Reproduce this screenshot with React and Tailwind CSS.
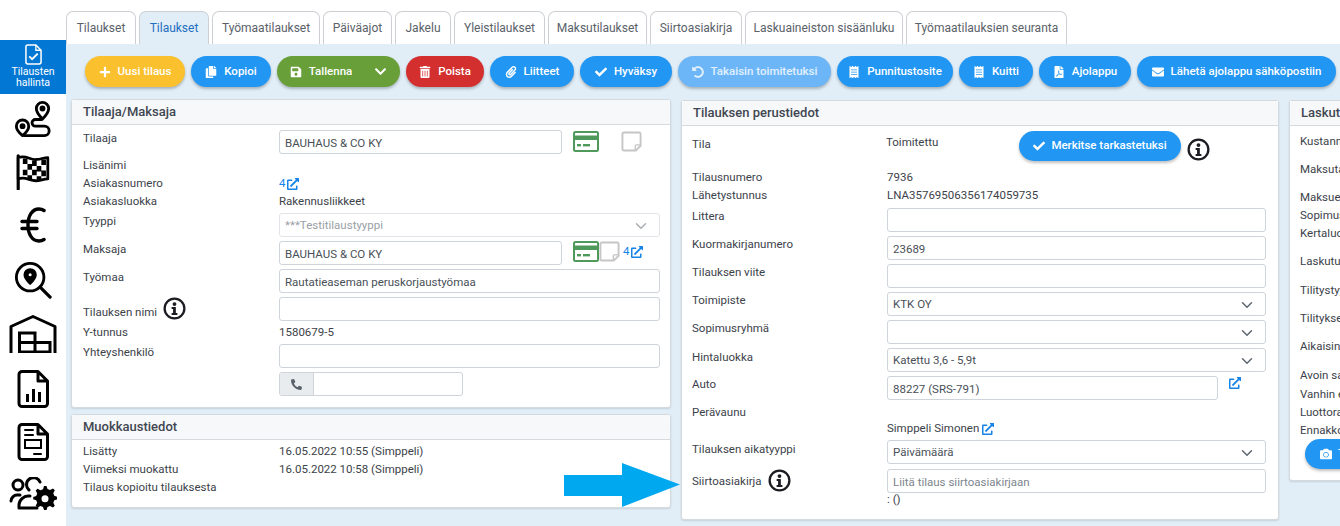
import { FaPlus, FaCopy, FaSave, FaTrashAlt, FaPaperclip, FaCheck, FaUndoAlt, FaReceipt, FaFilePdf, FaEnvelope, FaChevronDown, FaPhoneAlt, FaCamera, FaExternalLinkAlt } from 'react-icons/fa'
import { ChevronDown } from 'lucide-react'

const tabs = [
  ['Tilaukset', 'w-[70px]'],
  ['Tilaukset', 'w-[70px]', true],
  ['Työmaatilaukset', 'w-[108px]'],
  ['Päiväajot', 'w-[69px]'],
  ['Jakelu', 'w-[56px]'],
  ['Yleistilaukset', 'w-[91px]'],
  ['Maksutilaukset', 'w-[99px]'],
  ['Siirtoasiakirja', 'w-[92px]'],
  ['Laskuaineiston sisäänluku', 'w-[158px]'],
  ['Työmaatilauksien seuranta', 'w-[161px]'],
]

const buttons = [
  ['Uusi tilaus', FaPlus, 'w-[100px] bg-[#fbc02d]'],
  ['Kopioi', FaCopy, 'w-[80px] bg-[#2196f3]'],
  ['Poista', FaTrashAlt, 'w-[78px] bg-[#d32f2f]'],
  ['Liitteet', FaPaperclip, 'w-[84px] bg-[#2196f3]'],
  ['Hyväksy', FaCheck, 'w-[92px] bg-[#2196f3]'],
  ['Takaisin toimitetuksi', FaUndoAlt, 'w-[153px] bg-[#6cb6f7] text-white/80'],
  ['Punnitustosite', FaReceipt, 'w-[116px] bg-[#2196f3]'],
  ['Kuitti', FaReceipt, 'w-[74px] bg-[#2196f3]'],
  ['Ajolappu', FaFilePdf, 'w-[92px] bg-[#2196f3]'],
  ['Lähetä ajolappu sähköpostiin', FaEnvelope, 'w-[199px] bg-[#2196f3]'],
]

function ActionButton({ label, icon: Icon, className }) {
  return (
    <button className={`flex h-[31px] shrink-0 items-center justify-center gap-[7px] rounded-full text-[11.5px] font-medium text-white shadow-[0_2px_3px_rgba(0,0,0,0.25)] ${className}`}>
      <Icon className="text-[12px]" />
      {label}
    </button>
  )
}

function Panel({ title, children, className = '' }) {
  return (
    <section className={`rounded-[3px] border border-[#d5dade] bg-white shadow-[0_1px_2px_rgba(0,0,0,0.12)] ${className}`}>
      <h3 className="flex h-[25px] items-center whitespace-nowrap border-b border-[#d5dade] bg-[#f7f8fa] px-[11px] text-[13px] font-medium text-[#3f4650]">
        {title}
      </h3>
      {children}
    </section>
  )
}

function Field({ value, placeholder, className = 'w-full' }) {
  return (
    <input
      readOnly
      value={value ?? ''}
      placeholder={placeholder}
      className={`h-[24px] rounded-[3px] border border-[#ced4da] bg-white px-[5px] pt-px text-[11.5px] text-[#495057] outline-none placeholder:text-[#7d858d] ${className}`}
    />
  )
}

function Select({ value, disabled }) {
  return (
    <div className={`flex h-[24px] w-full items-center rounded-[3px] border pl-[5px] pr-[9px] pt-px text-[11.5px] ${disabled ? 'border-[#e1e4e8] text-[#9aa0a6]' : 'border-[#ced4da] text-[#495057]'}`}>
      {value}
      <ChevronDown strokeWidth={2} className={`ml-auto h-[18px] w-[18px] ${disabled ? 'text-[#a9aeb3]' : 'text-[#5f6770]'}`} />
    </div>
  )
}

function InfoIcon({ className = '' }) {
  return (
    <svg viewBox="0 0 24 24" className={`h-[23px] w-[23px] shrink-0 ${className}`}>
      <circle cx="12" cy="12" r="10.300" fill="none" stroke="#1c1c22" strokeWidth="2.400" />
      <circle cx="12" cy="7.400" r="2" fill="#1c1c22" />
      <path d="M9 10.400h4.400v6.200h1.600v2.200H9v-2.200h1.500v-4H9z" fill="#1c1c22" />
    </svg>
  )
}

function OpenLink({ className = '' }) {
  return <FaExternalLinkAlt className={`text-[12px] text-[#1683e6] ${className}`} />
}

function CardIcon() {
  return (
    <svg viewBox="0 0 26 21" className="h-[21px] w-[26px] shrink-0">
      <rect x="1" y="1" width="24" height="19" rx="1.500" fill="#fff" stroke="#4f9a5b" strokeWidth="2" />
      <rect x="1" y="4.500" width="24" height="4.500" fill="#4f9a5b" />
      <rect x="4" y="13" width="4" height="2.400" fill="#4f9a5b" />
      <rect x="10" y="13" width="7" height="2.400" fill="#4f9a5b" />
    </svg>
  )
}

function NoteIcon() {
  return (
    <svg viewBox="0 0 22 22" className="h-[21px] w-[21px] shrink-0">
      <path d="M3 1.500h16a1.500 1.500 0 0 1 1.500 1.500v12.500l-5 5H3A1.500 1.500 0 0 1 1.500 19V3A1.500 1.500 0 0 1 3 1.500z" fill="#fff" stroke="#c6c6c6" strokeWidth="2" />
      <path d="M15 20v-4.500a1 1 0 0 1 1-1h4.500" fill="none" stroke="#c6c6c6" strokeWidth="1.500" />
    </svg>
  )
}

const sideStroke = { fill: 'none', stroke: '#000', strokeWidth: 3, strokeLinecap: 'round', strokeLinejoin: 'round' }

function RouteIcon() {
  return (
    <svg viewBox="0 0 40 40" className="h-[38px] w-[40px]" {...sideStroke}>
      <path d="M30 2.500a6.500 6.500 0 0 1 6.500 6.500c0 4.500-6.500 11-6.500 11s-6.500-6.500-6.500-11A6.500 6.500 0 0 1 30 2.500z" />
      <circle cx="30" cy="9" r="1.600" fill="#000" />
      <path d="M9 21a6.500 6.500 0 0 1 6.500 6.500c0 4.500-6.500 10-6.500 10s-6.500-5.500-6.500-10A6.500 6.500 0 0 1 9 21z" />
      <circle cx="9" cy="27.500" r="1.600" fill="#000" />
      <path d="M29 20.500h-6.500a3.500 3.500 0 0 0 0 7H32a5 5 0 0 1 0 10H11" />
    </svg>
  )
}

function FlagIcon() {
  return (
    <svg viewBox="0 0 40 40" className="h-[37px] w-[38px]">
      <path d="M4 3v36" {...sideStroke} strokeWidth="3.400" />
      <path d="M4 5c9-3 13 3 20 2 5-.5 8-2 12-2v23c-5 0-8 2-13 2-7 0-11-5-19-2z" fill="#fff" stroke="#000" strokeWidth="3" strokeLinejoin="round" />
      <path d="M9 6h5v6H9zM19 8h5v6h-5zM29 7h5v6h-5zM14 12h5v6h-5zM24 14h5v6h-5zM9 18h5v6H9zM19 18h5v6h-5zM29 19h5v6h-5zM14 24h5v4h-5zM24 25h5v4h-5z" fill="#000" />
    </svg>
  )
}

function EuroIcon() {
  return (
    <svg viewBox="0 0 26 36" className="h-[36px] w-[26px]" {...sideStroke} strokeWidth="3.400">
      <path d="M24 3.500c-1.500-1-3.500-1.500-5-1.500C12 2 8 9 8 18s4 16 11 16c1.500 0 3.500-.5 5-1.500" />
      <path d="M2 14.500h15M2 21.500h15" />
    </svg>
  )
}

function SearchPinIcon() {
  return (
    <svg viewBox="0 0 40 40" className="h-[38px] w-[38px]" {...sideStroke} strokeWidth="3">
      <circle cx="17" cy="17" r="14.500" />
      <path d="M27.500 27.500 38 38" strokeWidth="3.400" />
      <path d="M17 9a5.500 5.500 0 0 1 5.500 5.500c0 3.500-5.500 9-5.500 9s-5.500-5.500-5.500-9A5.500 5.500 0 0 1 17 9z" fill="#000" />
      <circle cx="17" cy="14.500" r="1.600" fill="#fff" stroke="none" />
    </svg>
  )
}

function WarehouseIcon() {
  return (
    <svg viewBox="0 0 48 38" className="h-[38px] w-[48px]" fill="none" stroke="#000" strokeWidth="3">
      <path d="M2 38V11.500L24 1.500l22 10V38" strokeLinejoin="round" />
      <path d="M10.500 37V18h15.500v9.500h15V37zM10.500 27.500H26M26 27.500V37" />
    </svg>
  )
}

function ReportIcon() {
  return (
    <svg viewBox="0 0 32 38" className="h-[38px] w-[32px]">
      <path d="M5 1.500h16l9.500 9.500v22.500a3 3 0 0 1-3 3H5a3 3 0 0 1-3-3v-29a3 3 0 0 1 3-3z M21 1.500V11h9.500" {...sideStroke} />
      <path d="M9 24h3v8H9zM15 19h3v13h-3zM21 22h3v10h-3z" fill="#000" />
    </svg>
  )
}

function DocIcon() {
  return (
    <svg viewBox="0 0 32 38" className="h-[38px] w-[32px]">
      <path d="M5 1.500h16l9.500 9.500v22.500a3 3 0 0 1-3 3H5a3 3 0 0 1-3-3v-29a3 3 0 0 1 3-3z M21 1.500V11h9.500" {...sideStroke} />
      <path d="M8 7h8M8 12h8M17 31h7" {...sideStroke} strokeWidth="2" />
      <rect x="8" y="17" width="16" height="8" fill="none" stroke="#000" strokeWidth="2" />
    </svg>
  )
}

function PeopleGearIcon() {
  return (
    <svg viewBox="0 0 48 36" className="h-[36px] w-[48px]">
      <circle cx="9" cy="8" r="5" {...sideStroke} />
      <path d="M2 24c0-3 3-6 6-6h3" {...sideStroke} />
      <path d="M20 13a7 7 0 1 1 11-8" {...sideStroke} />
      <path d="M10 31v-3c0-5 5-9 9-9h2M10 31h18" {...sideStroke} />
      <path d="M35 12l2.500 0 1 3 2.500 1 3-1.500 1.800 1.800-1.500 3 1 2.500 3 1v2.500l-3 1-1 2.500 1.500 3-1.800 1.800-3-1.500-2.500 1-1 3H35l-1-3-2.500-1-3 1.500-1.800-1.800 1.500-3-1-2.500-3-1V23l3-1 1-2.500-1.500-3 1.800-1.800 3 1.500 2.500-1z" fill="#000" transform="translate(0 -3)" />
      <circle cx="36" cy="21.700" r="3.500" fill="#fff" />
    </svg>
  )
}

function Sidebar() {
  return (
    <aside className="flex w-[66px] shrink-0 flex-col items-center bg-white pt-[40px]">
      <div className="flex h-[54px] w-full flex-col items-center bg-[#0277d4] pt-[4px] text-center text-[10.500px] leading-[11px] text-white">
        <svg viewBox="0 0 18 22" className="mb-[1px] h-[21px] w-[17px]">
          <path d="M3 1h8.500L17 6.500V19a2 2 0 0 1-2 2H3a2 2 0 0 1-2-2V3a2 2 0 0 1 2-2z" fill="none" stroke="#fff" strokeWidth="1.600" />
          <path d="M11.500 1v5.500H17" fill="none" stroke="#fff" strokeWidth="1.400" />
          <path d="M4.500 13l3 3 6-6" fill="none" stroke="#fff" strokeWidth="2" />
        </svg>
        <span>Tilausten</span>
        <span>hallinta</span>
      </div>
      <div className="flex flex-col items-center">
        <div className="mt-[6px]"><RouteIcon /></div>
        <div className="mt-[15px]"><FlagIcon /></div>
        <div className="mt-[17px]"><EuroIcon /></div>
        <div className="mt-[18px]"><SearchPinIcon /></div>
        <div className="mt-[16px]"><WarehouseIcon /></div>
        <div className="mt-[17px]"><ReportIcon /></div>
        <div className="mt-[15px]"><DocIcon /></div>
        <div className="mt-[16px]"><PeopleGearIcon /></div>
      </div>
    </aside>
  )
}

function Label({ children, className = '' }) {
  return <div className={`text-[11.5px] leading-[16px] text-[#3c424a] ${className}`}>{children}</div>
}

function CustomerPanel() {
  const rowClass = 'grid h-[28px] grid-cols-[196px_381px] pl-[11px]'
  const textRow = 'grid h-[18px] grid-cols-[196px_381px] items-center pl-[11px] text-[11.5px] text-[#3c424a]'
  return (
    <Panel title="Tilaaja/Maksaja" className="h-[309px]">
      <div className="flex items-start pl-[11px] pt-[5px]">
        <Label className="w-[196px] shrink-0">Tilaaja</Label>
        <Field value="BAUHAUS & CO KY" className="w-[283px]" />
        <div className="ml-[11px] mt-[1px] flex items-center gap-[22px]">
          <CardIcon />
          <NoteIcon />
        </div>
      </div>
      <div className="mt-[3px]">
        <div className={textRow}>Lisänimi</div>
        <div className={textRow}>
          <span>Asiakasnumero</span>
          <span className="flex items-center gap-[2px] text-[#1683e6]">4 <OpenLink /></span>
        </div>
        <div className={textRow}>
          <span>Asiakasluokka</span>
          <span>Rakennusliikkeet</span>
        </div>
      </div>
      <div className="mt-[2px]">
        <div className={rowClass}>
          <Label>Tyyppi</Label>
          <Select value="***Testitilaustyyppi" disabled />
        </div>
        <div className={rowClass}>
          <Label>Maksaja</Label>
          <div className="flex items-start">
            <Field value="BAUHAUS & CO KY" className="w-[283px]" />
            <div className="ml-[11px] flex items-center">
              <CardIcon />
              <NoteIcon />
              <span className="ml-[3px] flex items-center gap-[2px] text-[11.5px] text-[#1683e6]">4 <OpenLink /></span>
            </div>
          </div>
        </div>
        <div className={rowClass}>
          <Label>Työmaa</Label>
          <Field value="Rautatieaseman peruskorjaustyömaa" />
        </div>
        <div className={rowClass}>
          <Label className="flex items-start gap-[6px]"><span className="pt-[7px]">Tilauksen nimi</span> <InfoIcon /></Label>
          <Field />
        </div>
        <div className="grid h-[19px] grid-cols-[196px_381px] pl-[11px] text-[11.5px] leading-[14px] text-[#3c424a]">
          <span>Y-tunnus</span>
          <span>1580679-5</span>
        </div>
        <div className={rowClass}>
          <Label>Yhteyshenkilö</Label>
          <Field />
        </div>
        <div className={rowClass}>
          <span />
          <div className="flex h-[24px] w-[184px] overflow-hidden rounded-[3px] border border-[#ced4da]">
            <div className="flex w-[34px] items-center justify-center border-r border-[#ced4da] bg-[#e9ecef]">
              <FaPhoneAlt className="text-[11px] text-[#59616a]" />
            </div>
          </div>
        </div>
      </div>
    </Panel>
  )
}

function EditsPanel() {
  const rows = [
    ['Lisätty', '16.05.2022 10:55 (Simppeli)'],
    ['Viimeksi muokattu', '16.05.2022 10:58 (Simppeli)'],
    ['Tilaus kopioitu tilauksesta', ''],
  ]
  return (
    <Panel title="Muokkaustiedot" className="h-[94px]">
      <div className="pl-[11px] pt-[3px]">
        {rows.map(([k, v]) => (
          <div key={k} className="grid h-[18px] grid-cols-[196px_1fr] items-center text-[11.5px] text-[#3c424a]">
            <span>{k}</span>
            <span>{v}</span>
          </div>
        ))}
      </div>
    </Panel>
  )
}

function BasicInfoPanel() {
  const rowClass = 'grid h-[28px] grid-cols-[195px_379px] pl-[10px]'
  return (
    <Panel title="Tilauksen perustiedot" className="h-[420px]">
      <div className="flex h-[43px] items-start pl-[10px] pt-[5px]">
        <Label className="w-[194px] shrink-0 pt-[5px]">Tila</Label>
        <Label className="w-[133px] shrink-0 pt-[3px]">Toimitettu</Label>
        <button className="flex h-[30px] w-[162px] shrink-0 items-center justify-center gap-[6px] rounded-full bg-[#2196f3] text-[11.5px] font-medium text-white shadow-[0_2px_3px_rgba(0,0,0,0.25)]">
          <FaCheck className="text-[12px]" />
          Merkitse tarkastetuksi
        </button>
        <InfoIcon className="ml-[6px] mt-[7px]" />
      </div>
      <div className="grid h-[18px] grid-cols-[195px_1fr] items-center pl-[10px] text-[11.5px] text-[#3c424a]">
        <span>Tilausnumero</span>
        <span>7936</span>
      </div>
      <div className="grid h-[18px] grid-cols-[195px_1fr] items-center pl-[10px] text-[11.5px] text-[#3c424a]">
        <span>Lähetystunnus</span>
        <span>LNA35769506356174059735</span>
      </div>
      <div className="mt-[3px]">
        <div className={rowClass}><Label>Littera</Label><Field /></div>
        <div className={rowClass}><Label>Kuormakirjanumero</Label><Field value="23689" /></div>
        <div className={rowClass}><Label>Tilauksen viite</Label><Field /></div>
        <div className={rowClass}><Label>Toimipiste</Label><Select value="KTK OY" /></div>
        <div className={rowClass}><Label>Sopimusryhmä</Label><Select value="" /></div>
        <div className={rowClass}><Label className="pt-px">Hintaluokka</Label><Select value="Katettu 3,6 - 5,9t" /></div>
        <div className={rowClass}>
          <Label>Auto</Label>
          <div className="flex items-start">
            <Field value="88227 (SRS-791)" className="w-[331px]" />
            <OpenLink className="ml-[11px] mt-px" />
          </div>
        </div>
        <div className="h-[16px] pl-[10px]"><Label>Perävaunu</Label></div>
        <div className="grid h-[18px] grid-cols-[195px_1fr] items-center pl-[10px] text-[11.5px] text-[#3c424a]">
          <span />
          <span className="flex items-center gap-[3px]">Simppeli Simonen <OpenLink /></span>
        </div>
        <div className="mt-[2px] grid h-[29px] grid-cols-[195px_379px] pl-[10px]"><Label className="pt-px">Tilauksen aikatyyppi</Label><Select value="Päivämäärä" /></div>
        <div className="grid h-[24px] grid-cols-[195px_379px] pl-[10px]">
          <Label className="flex items-center gap-[6px]">Siirtoasiakirja <InfoIcon className="-mt-[2px]" /></Label>
          <Field placeholder="Liitä tilaus siirtoasiakirjaan" />
        </div>
        <div className="grid h-[12px] grid-cols-[195px_1fr] pl-[10px] text-[11.5px] leading-[12px] text-[#3c424a]">
          <span />
          <span>: ()</span>
        </div>
      </div>
    </Panel>
  )
}

function InvoicePanel() {
  const rows = [
    ['Kustannuspaikka', 'h-[28px]'],
    ['Maksutapa', 'h-[28px]'],
    ['Maksuehto', 'h-[18px]'],
    ['Sopimushinta', 'h-[18px]'],
    ['Kertaluonteinen', 'h-[28px]'],
    ['Laskutustapa', 'h-[29px]'],
    ['Tilitystyyppi', 'h-[28px]'],
    ['Tilityksen tila', 'h-[28px]'],
    ['Aikaisin lasku', 'h-[29px]'],
    ['Avoin saldo', 'h-[19px]'],
    ['Vanhin erä', 'h-[18px]'],
    ['Luottoraja', 'h-[18px]'],
    ['Ennakko', 'h-[18px]'],
  ]
  return (
    <Panel title="Laskutustiedot" className="h-[381px] w-[200px] shrink-0">
      <div className="pl-[10px] pt-[6px]">
        {rows.map(([label, h]) => (
          <div key={label} className={`whitespace-nowrap text-[11.5px] leading-[18px] text-[#3c424a] ${h}`}>{label}</div>
        ))}
        <button className="ml-[5px] flex h-[30px] w-[160px] items-center gap-[6px] rounded-full bg-[#2196f3] pl-[15px] text-[11.5px] font-medium text-white shadow-[0_2px_3px_rgba(0,0,0,0.25)]">
          <FaCamera className="text-[12px]" />
          Tallenna
        </button>
      </div>
    </Panel>
  )
}

export default function App() {
  return (
    <div className="relative flex h-[526px] w-[1340px] overflow-hidden bg-white font-['Roboto',sans-serif]">
      <Sidebar />
      <div className="min-w-0 flex-1">
        <nav className="flex h-[44px] items-end gap-[3px] bg-white">
          {tabs.map(([label, width, active], i) => (
            <div
              key={i}
              className={`flex h-[33px] shrink-0 items-center justify-center rounded-t-[7px] border border-b-0 border-[#ccd0d4] text-xs ${width} ${active ? 'bg-[#e1eef8] text-[#1f6fc0]' : 'bg-white text-[#5a6169]'}`}
            >
              {label}
            </div>
          ))}
        </nav>
        <main className="h-[482px] bg-[#e1eef8] pl-[5px]">
          <div className="flex gap-[6px] pl-[14px] pt-[12px]">
            {buttons.slice(0, 2).map(([label, icon, cls]) => (
              <ActionButton key={label} label={label} icon={icon} className={cls} />
            ))}
            <div className="flex h-[31px] w-[123px] shrink-0 items-center rounded-full bg-[#689f38] text-[11.5px] font-medium text-white shadow-[0_2px_3px_rgba(0,0,0,0.25)]">
              <span className="flex w-[84px] items-center justify-center gap-[7px] pl-[4px]">
                <FaSave className="text-[12px]" />
                Tallenna
              </span>
              <span className="flex flex-1 justify-center"><FaChevronDown className="text-[13px]" /></span>
            </div>
            {buttons.slice(2).map(([label, icon, cls]) => (
              <ActionButton key={label} label={label} icon={icon} className={cls} />
            ))}
          </div>
          <div className="mt-[12px] flex items-start gap-[10px]">
            <div className="flex w-[600px] shrink-0 flex-col gap-[6px]">
              <CustomerPanel />
              <EditsPanel />
            </div>
            <div className="mt-px w-[598px] shrink-0"><BasicInfoPanel /></div>
            <div className="mt-px"><InvoicePanel /></div>
          </div>
        </main>
      </div>
      {/* overlay arrow from the annotated screenshot */}
      <svg viewBox="0 0 116 44" className="absolute left-[564px] top-[463px] h-[44px] w-[116px]">
        <path d="M0 12h58V0l58 21.500L58 44V33H0z" fill="#00a8f0" />
      </svg>
    </div>
  )
}
